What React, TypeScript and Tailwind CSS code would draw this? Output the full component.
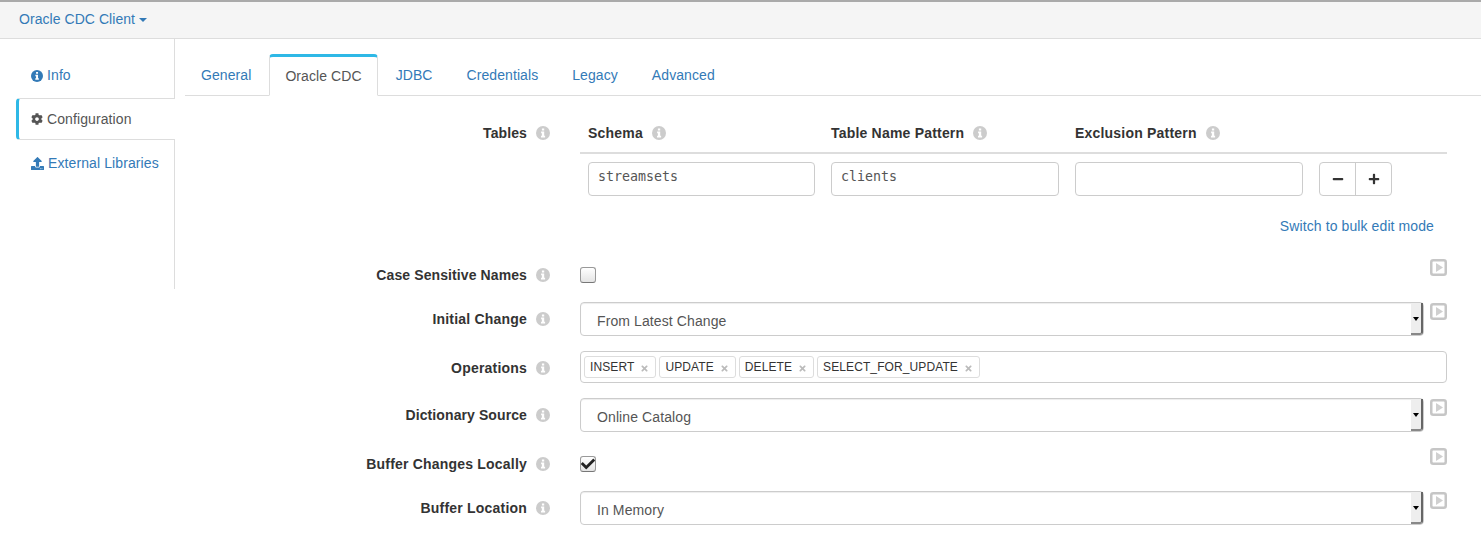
import { FaCheck, FaCog, FaMinus, FaPlus, FaTimes, FaUpload } from "react-icons/fa";

const inputClass = "h-[34px] rounded-[4px] border border-[#ccc] bg-white";
const monoClass = "pt-[4px] pl-[9px] font-['DejaVu_Sans_Mono',monospace] text-[13.3px] text-[#555]";

// old font-awesome info-circle, the "i" is wider than in FA5
function InfoIcon({ className }: { className: string }) {
  return (
    <svg viewBox="0 0 14 14" className={className}>
      <circle cx="7" cy="7" r="7" fill="currentColor" />
      <path d="M5.9 2.4h2.3v2h-2.3z M5.1 5.5h3.1v4.2h0.9v1.8h-4.1v-1.8h0.9v-2.4h-0.8z" fill="#fff" />
    </svg>
  );
}

function Hint() {
  return <InfoIcon className="h-[14px] w-[14px] shrink-0 text-[#ccc]" />;
}

function Label({ text, className = "", narrow }: { text: string; className?: string; narrow?: boolean }) {
  return (
    <div className={`flex w-[375px] shrink-0 items-center justify-end gap-[9px] ${className}`}>
      <span className={`text-[14px] font-bold text-[#333] ${narrow ? "tracking-[0.1px]" : "tracking-[0.2px]"}`}>{text}</span>
      <Hint />
    </div>
  );
}

function RunIcon() {
  return (
    <svg viewBox="0 0 17 17" className="mt-[1px] h-[17px] w-[17px] shrink-0">
      <rect x="1.25" y="1.25" width="14.5" height="14.5" rx="2" fill="none" stroke="#c6c6c6" strokeWidth="2.5" />
      <path d="M6 4 L13 8.5 L6 13 Z" fill="#d0d0d0" />
    </svg>
  );
}

function Select({ value }: { value: string }) {
  return (
    <div className="flex h-[34px] w-[844px] items-stretch justify-between rounded-[4px] border border-[#ccc] bg-white pl-4 shadow-[inset_0_1px_1px_rgba(0,0,0,0.075)]">
      <span className="self-center pt-[4px] text-[14px] tracking-[0.1px] text-[#555]">{value}</span>
      <span className="flex w-[12px] items-center justify-center rounded-br-[3px] border-r-2 border-b-2 border-r-[#666] border-b-[#888] bg-[#eee]">
        <span className="mt-[1px] h-0 w-0 border-x-[3px] border-t-[4px] border-x-transparent border-t-black" />
      </span>
    </div>
  );
}

function Checkbox({ checked }: { checked?: boolean }) {
  return (
    <span className="flex h-[16px] w-[16px] items-center justify-center rounded-[3px] border border-[#999] border-b-[#777] bg-[linear-gradient(#fff,#e4e4e4)]">
      {checked && <FaCheck className="h-[14px] w-[14px] shrink-0 text-[#222]" />}
    </span>
  );
}

function Tag({ text }: { text: string }) {
  return (
    <span className="flex h-[22px] items-center gap-[6px] rounded-[3px] border border-[#ddd] bg-white pr-[6px] pl-[5px] text-[12px] tracking-[0.1px] text-[#333]">
      {text}
      <FaTimes className="mt-[2px] h-[9px] w-[9px] text-[#bbb]" />
    </span>
  );
}

function SideItem({ children, active }: { children: React.ReactNode; active?: boolean }) {
  if (active) {
    return (
      <div className="-mr-px mb-[1px] flex h-[42px] items-center gap-[4px] rounded-l-[4px] border-y border-[#ddd] border-l-[3px] border-l-[#2eb8e6] bg-white pl-3 text-[14px] tracking-[0.1px] text-[#555]">
        {children}
      </div>
    );
  }
  return <div className="flex h-[45px] items-center gap-[4px] pl-[15px] text-[14px] tracking-[0.1px] text-[#337ab7]">{children}</div>;
}

function Tab({ text, active }: { text: string; active?: boolean }) {
  if (active) {
    return (
      <div className="mr-[2px] flex h-[42px] items-center rounded-t-[4px] border-x border-b border-x-[#ddd] border-b-white border-t-[3px] border-t-[#2eb8e6] bg-white px-[15px] pt-[1px] text-[14px] tracking-[0.08px] text-[#555]">
        {text}
      </div>
    );
  }
  return <div className="mr-[2px] flex h-[41px] items-center border-x border-transparent px-[15px] pt-[1px] text-[14px] tracking-[0.08px] text-[#337ab7]">{text}</div>;
}

export default function App() {
  return (
    <div className="h-[535px] w-[1481px] overflow-hidden bg-white font-['Liberation_Sans',sans-serif]">
      <div className="flex h-[39px] items-center border-t-2 border-b border-t-[#aaa] border-b-[#ddd] bg-[#f5f5f5] pb-[2px] pl-[19px] text-[14px] tracking-[0.05px] text-[#337ab7]">
        Oracle CDC Client
        <span className="mt-[2px] ml-[4px] h-0 w-0 border-x-[4px] border-t-[4px] border-x-transparent border-t-[#337ab7]" />
      </div>

      <div className="flex">
        <div className="h-[250px] w-[175px] shrink-0 border-r border-[#ddd] pt-[14px] pl-4">
          <SideItem>
            <InfoIcon className="h-[12px] w-[12px]" />
            Info
          </SideItem>
          <SideItem active>
            <FaCog className="h-[12px] w-[12px]" />
            Configuration
          </SideItem>
          <SideItem>
            <FaUpload className="h-[13px] w-[13px]" />
            External Libraries
          </SideItem>
        </div>

        <div className="min-w-0 flex-1 pt-[15px]">
          <div className="ml-[10px] flex h-[42px] border-b border-[#ddd]">
            <Tab text="General" />
            <Tab text="Oracle CDC" active />
            <Tab text="JDBC" />
            <Tab text="Credentials" />
            <Tab text="Legacy" />
            <Tab text="Advanced" />
          </div>

          <div className="flex pt-[27px]">
            <Label text="Tables" className="h-[20px]" narrow />
            <div className="ml-[30px] w-[867px]">
              <div className="flex h-[31px] gap-[16px] border-b-2 border-[#ddd] pl-2">
                {[
                  ["Schema", "w-[227px]"],
                  ["Table Name Pattern", "w-[228px]"],
                  ["Exclusion Pattern", "w-[228px]"],
                ].map(([name, width]) => (
                  <div key={name} className={`flex h-[20px] items-center gap-[9px] ${width}`}>
                    <span className="text-[14px] font-bold tracking-[0.2px] text-[#333]">{name}</span>
                    <Hint />
                  </div>
                ))}
              </div>
              <div className="flex gap-[16px] pt-[8px] pl-2">
                <div className={`${inputClass} ${monoClass} w-[227px]`}>streamsets</div>
                <div className={`${inputClass} ${monoClass} w-[228px]`}>clients</div>
                <div className={`${inputClass} w-[228px]`} />
                <div className={`${inputClass} flex w-[73px] items-stretch text-[#333]`}>
                  <span className="flex w-9 items-center justify-center border-r border-[#ccc]">
                    <FaMinus className="h-[12px] w-[12px]" />
                  </span>
                  <span className="flex flex-1 items-center justify-center">
                    <FaPlus className="h-[12px] w-[12px]" />
                  </span>
                </div>
              </div>
              <div className="mt-[20px] h-[20px] pr-[13px] text-right text-[14px] tracking-[0.1px] text-[#337ab7]">Switch to bulk edit mode</div>
            </div>
          </div>

          <div className="mt-[22px] flex h-[34px] items-center">
            <Label text="Case Sensitive Names" narrow />
            <div className="ml-[30px] flex h-full w-[867px] items-center justify-between">
              <Checkbox />
              <div className="self-start">
                <RunIcon />
              </div>
            </div>
          </div>

          <div className="mt-[10px] flex h-[34px] items-center">
            <Label text="Initial Change" />
            <div className="ml-[30px] flex h-full w-[867px] justify-between">
              <Select value="From Latest Change" />
              <RunIcon />
            </div>
          </div>

          <div className="mt-[14px] flex h-[34px] items-center">
            <Label text="Operations" className="pt-[2px]" />
            <div className="ml-[30px] flex h-[32px] w-[867px] items-center gap-[3px] rounded-[4px] border border-[#ccc] pl-[3px]">
              <Tag text="INSERT" />
              <Tag text="UPDATE" />
              <Tag text="DELETE" />
              <Tag text="SELECT_FOR_UPDATE" />
            </div>
          </div>

          <div className="mt-[14px] flex h-[34px] items-center">
            <Label text="Dictionary Source" narrow />
            <div className="ml-[30px] flex h-full w-[867px] justify-between">
              <Select value="Online Catalog" />
              <RunIcon />
            </div>
          </div>

          <div className="mt-[15px] flex h-[34px] items-center">
            <Label text="Buffer Changes Locally" />
            <div className="ml-[30px] flex h-full w-[867px] items-center justify-between">
              <Checkbox checked />
              <div className="self-start">
                <RunIcon />
              </div>
            </div>
          </div>

          <div className="mt-[10px] flex h-[34px] items-center">
            <Label text="Buffer Location" />
            <div className="ml-[30px] flex h-full w-[867px] justify-between">
              <Select value="In Memory" />
              <RunIcon />
            </div>
          </div>
        </div>
      </div>
    </div>
  );
}
